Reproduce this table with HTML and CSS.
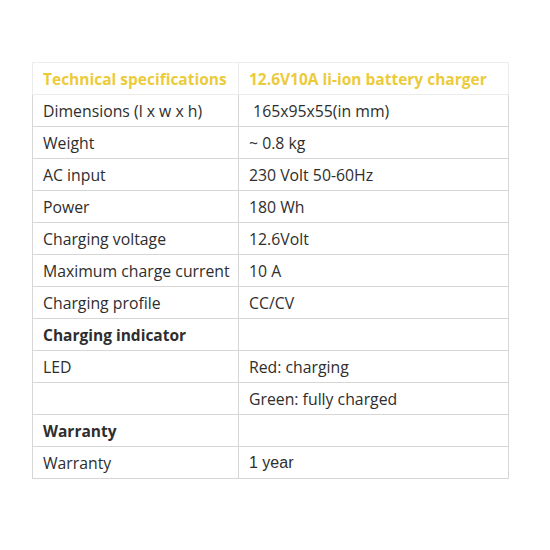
FILE: index.html
```html
<!DOCTYPE html>
<html>
<head>
<meta charset="utf-8">
<link rel="stylesheet" href="styles.css">
</head>
<body>
<div class="page">
<table class="specs">
<colgroup><col class="c1"><col class="c2"></colgroup>
<tr class="head"><td>Technical specifications</td><td>12.6V10A li-ion battery charger</td></tr>
<tr><td>Dimensions (l x w x h)</td><td>&nbsp;165x95x55(in mm)</td></tr>
<tr><td>Weight</td><td>~ 0.8 kg</td></tr>
<tr><td>AC input</td><td>230 Volt 50-60Hz</td></tr>
<tr><td>Power</td><td>180 Wh</td></tr>
<tr><td>Charging voltage</td><td>12.6Volt</td></tr>
<tr><td>Maximum charge current</td><td>10 A</td></tr>
<tr><td>Charging profile</td><td>CC/CV</td></tr>
<tr class="section"><td>Charging indicator</td><td></td></tr>
<tr><td>LED</td><td>Red: charging</td></tr>
<tr><td></td><td>Green: fully charged</td></tr>
<tr class="section"><td>Warranty</td><td></td></tr>
<tr><td>Warranty</td><td class="arial">1 year</td></tr>
</table>
</div>
</body>
</html>
```
FILE: styles.css
```css
html, body {
  margin: 0;
  padding: 0;
  background: #ffffff;
}
.page {
  padding: 62px 0 0 32px;
}
.specs {
  border-collapse: collapse;
  table-layout: fixed;
  width: 477px;
  font-family: "Open Sans", "DejaVu Sans", sans-serif;
  font-size: 15.8px;
  color: #2e2e2e;
}
.specs .c1 {
  width: 206px;
}
.specs td {
  border: 1px solid #d6d6d6;
  height: 32px;
  padding: 0 10px;
  box-sizing: border-box;
  vertical-align: middle;
  white-space: nowrap;
  overflow: visible;
}
.specs .head td {
  color: #eccb3a;
  font-weight: bold;
  font-size: 15.5px;
  border-color: #ececec;
}
.specs .section td:first-child {
  font-weight: bold;
  font-size: 15.5px;
}
.specs .arial {
  font-family: "Liberation Sans", Arial, sans-serif;
  font-size: 16px;
}
```
